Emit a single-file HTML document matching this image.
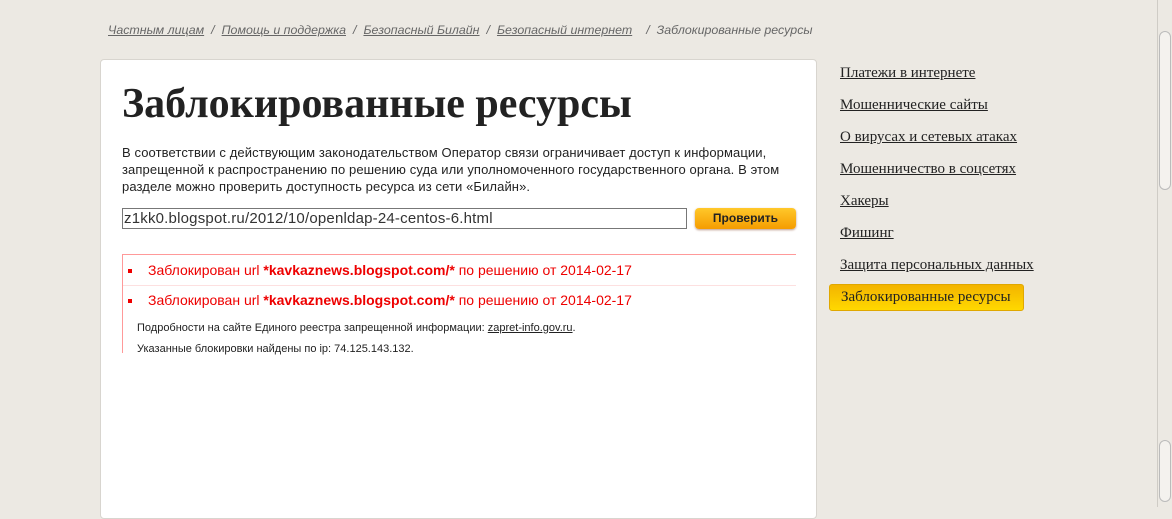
<!DOCTYPE html>
<html><head><meta charset="utf-8"><style>
*{margin:0;padding:0;box-sizing:border-box}
body{width:1172px;height:507px;overflow:hidden;background:#ece9e3;position:relative;font-family:"Liberation Sans",sans-serif}
.bc{position:absolute;top:23px;left:108px;font-size:12.4px;font-style:italic;color:#666;white-space:nowrap}
.bc a{color:#666;text-decoration:underline}
.bc span{margin:0 7px}
.panel{position:absolute;left:100px;top:59px;width:717px;height:460px;background:#fff;border:1px solid #d8d5cf;border-radius:4px}
h1{position:absolute;left:21px;top:20px;font-family:"Liberation Serif",serif;font-weight:bold;font-size:42px;color:#222;letter-spacing:0;white-space:nowrap}
.txt{position:absolute;left:21px;top:84px;width:674px;font-size:13px;line-height:17px;color:#222;letter-spacing:0.1px}
.inp{position:absolute;left:21px;top:148px;width:565px;height:21px;border:1px solid #777;font-size:15px;line-height:19px;padding-left:1px;color:#333;letter-spacing:0.2px}
.btn{position:absolute;left:594px;top:148px;width:101px;height:21px;border-radius:4px;background:linear-gradient(#ffc82a,#f59c00);box-shadow:0 1px 2px #b98;font-size:12px;font-weight:bold;text-align:center;line-height:21px;color:#222}
.res{position:absolute;left:21px;top:194px;width:674px;height:99px;border-left:1px solid #f99;border-top:1px solid #f99}
.it{height:29px;line-height:29px;padding-left:25px;font-size:14px;color:#e00;position:relative;letter-spacing:0}
.it:before{content:"";position:absolute;left:5px;top:13px;width:4px;height:4px;background:#e00}
.it+.it{border-top:1px solid #fde0e0}
.sm{font-size:11px;color:#222;padding-left:14px;line-height:21px;letter-spacing:0}
.sm a{color:#222;text-decoration:underline}
.side{position:absolute;left:840px;top:64px;font-family:"Liberation Serif",serif;font-size:15px;color:#222}
.side a{display:block;color:#222;text-decoration:underline;height:32px;line-height:18px}
.act{position:absolute;left:829px;top:284px;width:195px;height:27px;border-radius:3px;background:linear-gradient(#f3b400,#ffd800);border:1px solid #e0a800;font-family:"Liberation Serif",serif;font-size:15px;line-height:25px;padding-left:11px;color:#222}
.sb{position:absolute;left:1157px;top:0;width:15px;height:507px;background:#ece9e3;border-left:1px solid #cfccc6}
.th{position:absolute;left:1px;top:31px;width:12px;height:159px;border:1px solid #bbb;border-radius:6px;background:#f4f2ee}
.th2{position:absolute;left:1px;top:440px;width:12px;height:62px;border:1px solid #bbb;border-radius:6px;background:#f4f2ee}
</style></head><body>
<div class="bc"><a>Частным лицам</a><span>/</span><a>Помощь и поддержка</a><span>/</span><a>Безопасный Билайн</a><span>/</span><a>Безопасный интернет</a><span style="margin-left:14px">/</span>Заблокированные ресурсы</div>
<div class="panel">
<h1>Заблокированные ресурсы</h1>
<div class="txt">В соответствии с действующим законодательством Оператор связи ограничивает доступ к информации, запрещенной к распространению по решению суда или уполномоченного государственного органа. В этом разделе можно проверить доступность ресурса из сети «Билайн».</div>
<div class="inp">z1kk0.blogspot.ru/2012/10/openldap-24-centos-6.html</div>
<div class="btn">Проверить</div>
<div class="res">
<div class="it" style="margin-top:1px">Заблокирован url <b>*kavkaznews.blogspot.com/*</b> по решению от 2014-02-17</div>
<div class="it">Заблокирован url <b>*kavkaznews.blogspot.com/*</b> по решению от 2014-02-17</div>
<div class="sm" style="margin-top:4px">Подробности на сайте Единого реестра запрещенной информации: <a>zapret-info.gov.ru</a>.</div>
<div class="sm">Указанные блокировки найдены по ip: 74.125.143.132.</div>
</div>
</div>
<div class="side">
<a>Платежи в интернете</a><a>Мошеннические сайты</a><a>О вирусах и сетевых атаках</a><a>Мошенничество в соцсетях</a><a>Хакеры</a><a>Фишинг</a><a>Защита персональных данных</a>
</div>
<div class="act">Заблокированные ресурсы</div>
<div class="sb"><div class="th"></div><div class="th2"></div></div>
</body></html>
